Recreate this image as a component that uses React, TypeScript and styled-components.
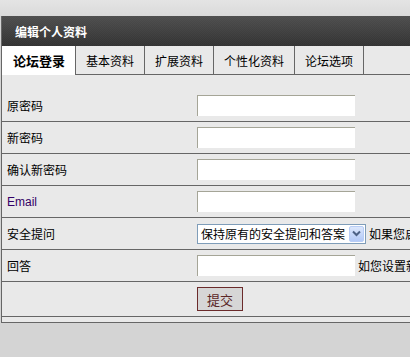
import React from "react"
import styled, { createGlobalStyle } from "styled-components"

const GlobalStyle = createGlobalStyle`
  html, body {
    margin: 0;
    padding: 0;
    background: #d4d4d4;
    overflow: hidden;
  }
  body {
    font-family: "Noto Sans CJK SC", "Liberation Sans", sans-serif;
    font-size: 12px;
    color: #000;
  }
`

const Page = styled.div`
  width: 410px;
  height: 357px;
  overflow: hidden;
  background: #d4d4d4;
`

const TopBand = styled.div`
  height: 16px;
  background: linear-gradient(to bottom, #e4e4e4, #dadada);
`

const Panel = styled.div`
  margin-left: 1px;
  width: 440px;
  border-left: 1px solid #666;
  border-bottom: 1px solid #666;
  background: #e9e9e9;
`

const Header = styled.div`
  height: 30px;
  display: flex;
  align-items: center;
  padding-left: 13px;
  color: #fff;
  font-weight: bold;
  font-size: 12px;
  background:
    linear-gradient(to bottom, rgba(90, 90, 90, 0.6), rgba(40, 40, 40, 0.5)),
    repeating-conic-gradient(#3c3c3c 0% 25%, #474747 0% 50%) 0 0 / 2px 2px;
`

const Tabs = styled.div`
  display: flex;
  height: 28px;
  border-bottom: 1px solid #666;
  background: #e9e9e9;
`

const Tab = styled.div<{ $active?: boolean }>`
  display: flex;
  align-items: center;
  padding: 0 10px;
  height: ${(p) => (p.$active ? "29px" : "28px")};
  border-right: 1px solid #666;
  background: ${(p) => (p.$active ? "#fff" : "#e9e9e9")};
  font-size: ${(p) => (p.$active ? "13px" : "12px")};
  font-weight: ${(p) => (p.$active ? "bold" : "normal")};
  padding-left: ${(p) => (p.$active ? "11px" : "10px")};
`

const Form = styled.div`
  padding-top: 15px;
  padding-bottom: 5px;
`

const Row = styled.div`
  display: flex;
  align-items: center;
  height: 31px;
  border-bottom: 1px solid #666;
`

const Label = styled.div<{ $latin?: boolean }>`
  flex: 0 0 190px;
  box-sizing: border-box;
  padding-left: 5px;
  font-size: 12px;
  white-space: nowrap;
  color: ${(p) => (p.$latin ? "#330066" : "#000")};
  font-family: ${(p) =>
    p.$latin ? '"Liberation Sans", Arial, sans-serif' : "inherit"};
`

const Field = styled.div`
  display: flex;
  align-items: center;
  gap: 3px;
  padding-left: 5px;
  min-width: 0;
`

const TextInput = styled.input`
  box-sizing: border-box;
  flex: 0 0 158px;
  width: 158px;
  height: 21px;
  border: none;
  border-top: 1px solid #a5a597;
  border-left: 1px solid #a5a597;
  background: #fff;
  padding: 0 2px;
  margin: 0;
`

const SelectBox = styled.div`
  box-sizing: border-box;
  flex: 0 0 169px;
  display: flex;
  align-items: center;
  height: 20px;
  border: 1px solid #7f9db9;
  background: #fff;
  padding-left: 3px;
  font-size: 12px;
`

const SelectText = styled.span`
  flex: 1;
  white-space: nowrap;
  overflow: hidden;
`

const ArrowButton = styled.span`
  display: flex;
  align-items: center;
  justify-content: center;
  flex: 0 0 15px;
  height: 16px;
  margin-right: 1px;
  border: 1px solid #b8cdf6;
  border-radius: 2px;
  background: linear-gradient(to bottom, #dce7fc, #b3c9f7);
  box-sizing: border-box;
`

const Hint = styled.span`
  font-size: 12px;
  white-space: nowrap;
`

const ButtonRow = styled.div`
  display: flex;
  align-items: center;
  height: 34px;
  padding-left: 195px;
  border-bottom: 1px solid #666;
`

const SubmitButton = styled.button`
  box-sizing: border-box;
  width: 46px;
  height: 24px;
  border: 1px solid #6b2b2b;
  background: #d6d6d6;
  color: #5a2626;
  font-family: "Noto Sans CJK SC", sans-serif;
  font-size: 13px;
  padding: 0;
`

const Chevron = () => (
  <svg width="9" height="7" viewBox="0 0 9 7">
    <path d="M1 1.5 L4.5 5 L8 1.5" stroke="#4d6185" strokeWidth="2" fill="none" />
  </svg>
)

const tabs = ["论坛登录", "基本资料", "扩展资料", "个性化资料", "论坛选项"]

export default function App() {
  return (
    <Page>
      <GlobalStyle />
      <TopBand />
      <Panel>
        <Header>编辑个人资料</Header>
        <Tabs>
          {tabs.map((t, i) => (
            <Tab key={t} $active={i === 0}>
              {t}
            </Tab>
          ))}
        </Tabs>
        <Form>
          <Row>
            <Label>原密码</Label>
            <Field>
              <TextInput type="password" />
            </Field>
          </Row>
          <Row>
            <Label>新密码</Label>
            <Field>
              <TextInput type="password" />
            </Field>
          </Row>
          <Row>
            <Label>确认新密码</Label>
            <Field>
              <TextInput type="password" />
            </Field>
          </Row>
          <Row>
            <Label $latin>Email</Label>
            <Field>
              <TextInput type="text" />
            </Field>
          </Row>
          <Row>
            <Label>安全提问</Label>
            <Field>
              <SelectBox>
                <SelectText>保持原有的安全提问和答案</SelectText>
                <ArrowButton>
                  <Chevron />
                </ArrowButton>
              </SelectBox>
              <Hint>如果您启用</Hint>
            </Field>
          </Row>
          <Row>
            <Label>回答</Label>
            <Field>
              <TextInput type="text" />
              <Hint>如您设置新</Hint>
            </Field>
          </Row>
          <ButtonRow>
            <SubmitButton>提交</SubmitButton>
          </ButtonRow>
        </Form>
      </Panel>
    </Page>
  )
}
